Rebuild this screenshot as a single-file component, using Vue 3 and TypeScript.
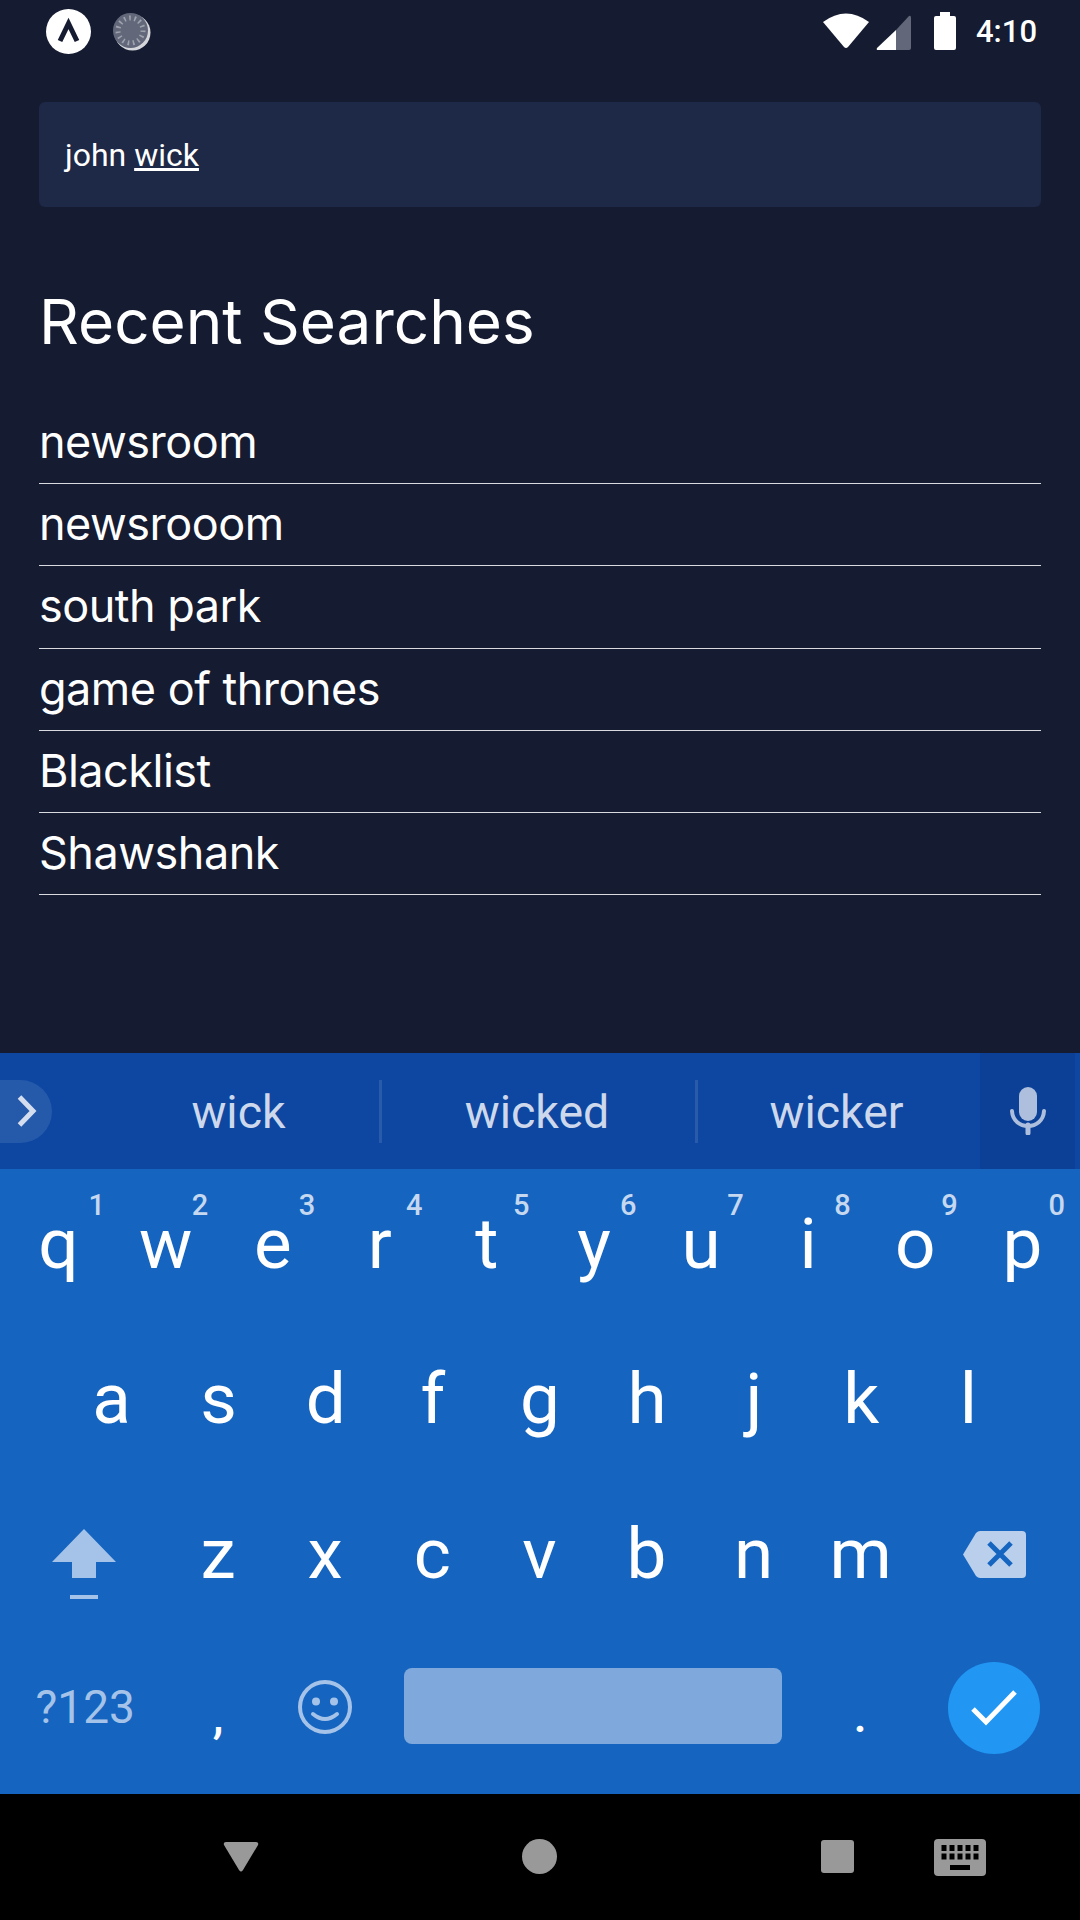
<template>
  <div class="screen">
    <div class="status-bar">
      <div class="status-left">
        <svg class="app-icon" width="45" height="45" viewBox="0 0 45 45">
          <circle cx="22.5" cy="22.5" r="22.5" fill="#fff" />
          <path d="M14 32 L22.5 14.5 L31 32" fill="none" stroke="#151b31" stroke-width="5" />
        </svg>
        <svg class="sync-icon" width="38" height="38" viewBox="0 0 38 38">
          <circle cx="19.5" cy="19.5" r="18" fill="#d6d7db" />
          <circle cx="17.5" cy="17.5" r="17.5" fill="#62687a" />
          <circle cx="17.5" cy="17.5" r="12.5" fill="none" stroke="#a0a3ae" stroke-width="5" stroke-dasharray="1.6 3.6" />
        </svg>
      </div>
      <div class="status-right">
        <svg width="46" height="36" viewBox="0 0 46 36">
          <path d="M0 9 Q23 -8 46 9 L25 34 Q23 36 21 34 Z" fill="#fff" />
        </svg>
        <svg class="signal" width="35" height="35" viewBox="0 0 35 35">
          <path d="M20 15 L33 1 Q35 0 35 3 V33 Q35 35 33 35 H20 Z" fill="#62687a" />
          <path d="M20 15 V35 H2 Q0 35 1 33 Z" fill="#fff" />
        </svg>
        <svg class="battery" width="22" height="38" viewBox="0 0 22 38">
          <path d="M6 0 H16 V4 H20 Q22 4 22 6 V36 Q22 38 20 38 H2 Q0 38 0 36 V6 Q0 4 2 4 H6 Z" fill="#fff" />
        </svg>
        <span class="clock">4:10</span>
      </div>
    </div>

    <div class="content">
      <div class="search-box">john <u>wick</u></div>
      <h1 class="title">Recent Searches</h1>
      <ul class="recent-list">
        <li v-for="item in recentSearches" :key="item">{{ item }}</li>
      </ul>
    </div>

    <div class="keyboard">
      <div class="suggestions">
        <div class="expand">
          <svg width="20" height="34" viewBox="0 0 20 34">
            <path d="M2.5 3 L16 17 L2.5 31" fill="none" stroke="#d5deef" stroke-width="5" />
          </svg>
        </div>
        <div v-for="word in suggestions" :key="word.text" class="word" :class="{ wide: word.wide, last: word.last }">{{ word.text }}</div>
        <div class="mic">
          <svg width="36" height="48" viewBox="0 0 36 48">
            <rect x="9" y="0" width="18" height="34" rx="9" fill="#aebfdd" />
            <path d="M2 24 C3 44 33 44 34 24" fill="none" stroke="#aebfdd" stroke-width="4" stroke-linecap="round" />
            <path d="M18 38 V46" fill="none" stroke="#aebfdd" stroke-width="5" stroke-linecap="round" />
          </svg>
        </div>
      </div>

      <div class="row row-one">
        <div v-for="(k, i) in rowOne" :key="k" class="key">
          {{ k }}<span class="hint">{{ (i + 1) % 10 }}</span>
        </div>
      </div>
      <div class="row row-two">
        <div v-for="k in rowTwo" :key="k" class="key">{{ k }}</div>
      </div>
      <div class="row">
        <div class="side-key">
          <svg class="shift-icon" width="64" height="71" viewBox="0 0 64 71">
            <path d="M32 0 L64 33 H44 V49 H20 V33 H0 Z" fill="#a5c3e8" />
            <rect x="18" y="66" width="28" height="4" fill="#a5c3e8" />
          </svg>
        </div>
        <div v-for="k in rowThree" :key="k" class="key">{{ k }}</div>
        <div class="side-key delete">
          <svg width="63" height="47" viewBox="0 0 63 47">
            <path d="M17 0 H59 Q63 0 63 4 V43 Q63 47 59 47 H17 Q15 47 13 45 L0 23.5 L13 2 Q15 0 17 0 Z" fill="#b9cfec" />
            <path d="M26 12 L48 34 M48 12 L26 34" stroke="#1565c0" stroke-width="5" />
          </svg>
        </div>
      </div>
      <div class="row bottom-row">
        <div class="side-key symbols">?123</div>
        <div class="key punct">,</div>
        <div class="key emoji">
          <svg width="54" height="54" viewBox="0 0 54 54">
            <circle cx="27" cy="27" r="25" fill="none" stroke="#a5c3e8" stroke-width="4" />
            <circle cx="18" cy="21.5" r="4" fill="#a5c3e8" />
            <circle cx="36" cy="21.5" r="4" fill="#a5c3e8" />
            <path d="M15 34 Q27 44 39 34" fill="none" stroke="#a5c3e8" stroke-width="4" stroke-linecap="round" />
          </svg>
        </div>
        <div class="space-cell"><div class="space-bar"></div></div>
        <div class="key punct">.</div>
        <div class="side-key enter-cell">
          <div class="enter">
            <svg width="46" height="36" viewBox="0 0 46 36">
              <path d="M2 19 L15 32 L44 2" fill="none" stroke="#fff" stroke-width="5" />
            </svg>
          </div>
        </div>
      </div>
    </div>

    <div class="nav-bar">
      <svg class="nav-back" width="36" height="30" viewBox="0 0 36 30">
        <path d="M3 0 H33 Q36 0 35 3 L20 28 Q18 31 16 28 L1 3 Q0 0 3 0 Z" fill="#999" />
      </svg>
      <span class="nav-home"></span>
      <span class="nav-recent"></span>
      <svg class="nav-keyboard" width="52" height="37" viewBox="0 0 52 37">
        <rect width="52" height="37" rx="4" fill="#999" />
        <g fill="#000">
          <rect v-for="n in keyDots" :key="n.id" :x="n.x" :y="n.y" width="5" height="6" />
          <rect x="16" y="26" width="20" height="5" />
        </g>
      </svg>
    </div>
  </div>
</template>

<script setup lang="ts">
interface Suggestion {
  text: string
  wide?: boolean
  last?: boolean
}

const recentSearches: string[] = ['newsroom', 'newsrooom', 'south park', 'game of thrones', 'Blacklist', 'Shawshank']

const suggestions: Suggestion[] = [
  { text: 'wick' },
  { text: 'wicked', wide: true },
  { text: 'wicker', last: true }
]

const rowOne = 'qwertyuiop'.split('')
const rowTwo = 'asdfghjkl'.split('')
const rowThree = 'zxcvbnm'.split('')

// little key caps on the keyboard switch icon
const keyDots: { id: number; x: number; y: number }[] = []
for (let r = 0; r < 2; r++) {
  for (let c = 0; c < 5; c++) {
    keyDots.push({ id: r * 5 + c, x: 7.5 + c * 8, y: 6 + r * 8.5 })
  }
}
</script>

<style>
html, body {
  margin: 0;
  background: #151b31;
}
</style>

<style scoped>
.screen {
  width: 1080px;
  height: 1920px;
  display: flex;
  flex-direction: column;
  background: #151b31;
  font-family: Roboto, "Liberation Sans", sans-serif;
  color: #fff;
  overflow: hidden;
}

.status-bar {
  height: 62px;
  display: flex;
  justify-content: space-between;
  align-items: center;
  padding: 0 43px 0 46px;
  flex-shrink: 0;
}

.status-left {
  display: flex;
  align-items: center;
  gap: 22px;
}

.sync-icon {
  margin-top: 1px;
}

.status-right {
  display: flex;
  align-items: center;
}

.signal {
  margin-left: 7px;
  margin-top: 2px;
}

.battery {
  margin-left: 23px;
}

.clock {
  margin-left: 20px;
  font-size: 31px;
  font-weight: 500;
}

.content {
  flex: 1;
  padding: 40px 39px 0;
}

.search-box {
  height: 105px;
  line-height: 107px;
  padding-left: 26px;
  background: #1e2847;
  border-radius: 6px;
  font-size: 32px;
}

.title {
  margin: 79px 0 0 0;
  font-family: Inter, Roboto, sans-serif;
  font-size: 62px;
  line-height: 72px;
  font-weight: 400;
}

.recent-list {
  list-style: none;
  margin: 44px 0 0;
  padding: 0;
  font-family: Inter, Roboto, sans-serif;
}

.recent-list li {
  height: 82.2px;
  line-height: 79px;
  border-bottom: 1px solid #d8dae0;
  box-sizing: border-box;
  font-size: 45px;
  letter-spacing: -0.5px;
}

.keyboard {
  height: 741px;
  flex-shrink: 0;
  background: #1565c0;
}

.suggestions {
  height: 116px;
  display: flex;
  align-items: center;
  background: #0d47a1;
  padding-right: 5px;
}

.expand {
  width: 52px;
  height: 63px;
  margin-right: 46px;
  display: flex;
  align-items: center;
  justify-content: center;
  background: rgba(255, 255, 255, 0.1);
  border-radius: 0 32px 32px 0;
  box-sizing: border-box;
  padding-left: 2px;
}

.word {
  width: 284px;
  height: 63px;
  line-height: 65px;
  text-align: center;
  font-size: 46.5px;
  color: #cdd8ec;
  border-right: 3px solid #2a5bab;
  box-sizing: border-box;
}

.word.wide {
  width: 316px;
  padding-right: 3px;
}

.word.last {
  width: 282px;
  padding-right: 5px;
  border-right: none;
}

.mic {
  flex: 1;
  height: 116px;
  display: flex;
  align-items: center;
  justify-content: center;
  background: #0c4096;
}

.row {
  height: 155px;
  display: flex;
}

.row-one {
  padding-left: 5px;
}

.row-two {
  padding-left: 58px;
}

.key {
  position: relative;
  width: 107.1px;
  flex-shrink: 0;
  display: flex;
  align-items: center;
  justify-content: center;
  font-size: 71px;
  padding-bottom: 7px;
  box-sizing: border-box;
}

.hint {
  position: absolute;
  top: 19px;
  right: 11px;
  font-size: 29px;
  line-height: 34px;
  font-weight: 500;
  color: #c5d8f0;
}

.key:first-child .hint {
  right: 7px;
}

.side-key {
  width: 164.5px;
  flex-shrink: 0;
  display: flex;
  align-items: center;
  justify-content: center;
}

.shift-icon {
  margin-top: 16px;
  margin-left: 3px;
}

.delete {
  flex: 1;
  margin-bottom: 4px;
  padding-right: 5px;
  box-sizing: border-box;
}

.bottom-row {
  height: 160px;
  padding-bottom: 15px;
  box-sizing: border-box;
}

.symbols {
  font-size: 46px;
  color: #a5c3e8;
  padding-left: 6px;
  box-sizing: border-box;
}

.emoji {
  padding-bottom: 0;
  padding-top: 1px;
}

.space-cell {
  width: 428px;
  flex-shrink: 0;
  display: flex;
  align-items: center;
  justify-content: center;
  padding-bottom: 2px;
  box-sizing: border-box;
}

.space-bar {
  width: 378px;
  height: 76px;
  background: #7fa9dc;
  border-radius: 8px;
}

.punct {
  font-size: 48px;
  font-weight: 500;
  padding-top: 17px;
  padding-bottom: 0;
}

.enter-cell {
  flex: 1;
  width: auto;
  padding-right: 6px;
  padding-top: 2px;
  box-sizing: border-box;
}

.enter {
  width: 92px;
  height: 92px;
  border-radius: 50%;
  background: #2196f3;
  display: flex;
  align-items: center;
  justify-content: center;
}

.nav-bar {
  position: relative;
  height: 126px;
  flex-shrink: 0;
  background: #000;
}

.nav-back {
  position: absolute;
  left: 223px;
  top: 48px;
}

.nav-home {
  position: absolute;
  left: 522px;
  top: 45px;
  width: 35px;
  height: 35px;
  border-radius: 50%;
  background: #999;
}

.nav-recent {
  position: absolute;
  left: 821px;
  top: 46px;
  width: 33px;
  height: 33px;
  border-radius: 3px;
  background: #999;
}

.nav-keyboard {
  position: absolute;
  left: 934px;
  top: 45px;
}
</style>
